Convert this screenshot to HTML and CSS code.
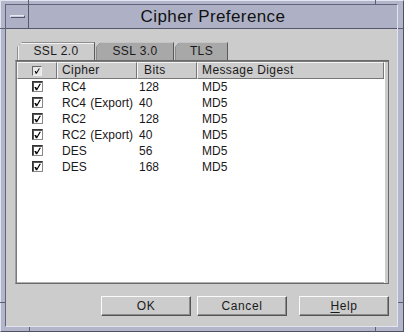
FILE: index.html
```html
<!DOCTYPE html>
<html lang="en">
<head>
    <meta charset="UTF-8">
    <title>Cipher Preference</title>
    <link rel="stylesheet" href="styles.css">
</head>
<body>
    <div class="frame">
        <span class="notch notch-tl-h"></span>
        <span class="notch notch-tl-v"></span>
        <span class="notch notch-tr-h"></span>
        <span class="notch notch-tr-v"></span>
        <span class="notch notch-bl-h"></span>
        <span class="notch notch-bl-v"></span>
        <span class="notch notch-br-h"></span>
        <span class="notch notch-br-v"></span>
        <div class="window">
            <div class="titlebar">
                <div class="minimize"><span class="dash"></span></div>
                <div class="title">Cipher Preference</div>
            </div>
            <div class="content">
                <div class="tabs">
                    <div class="tab active">SSL 2.0</div>
                    <div class="tab">SSL 3.0</div>
                    <div class="tab tab-small">TLS</div>
                </div>
                <div class="panel">
                    <div class="table">
                        <div class="head"><span class="box box-head"><svg viewBox="0 0 10 10"><polygon points="2,5 3.5,5 4.3,6.6 7.3,2 8.6,2 4.6,8.4 3.4,8.4"/></svg></span></div>
                        <div class="head">Cipher</div>
                        <div class="head head-bits">Bits</div>
                        <div class="head">Message Digest</div>

                        <div class="cell check"><span class="box"><svg viewBox="0 0 10 10"><polygon points="1.5,5 3.5,5 4.3,6.6 7.3,1.5 8.8,1.5 4.6,8.6 3.2,8.6"/></svg></span></div>
                        <div class="cell">RC4</div><div class="cell bits">128</div><div class="cell">MD5</div>

                        <div class="cell check"><span class="box"><svg viewBox="0 0 10 10"><polygon points="1.5,5 3.5,5 4.3,6.6 7.3,1.5 8.8,1.5 4.6,8.6 3.2,8.6"/></svg></span></div>
                        <div class="cell">RC4 (Export)</div><div class="cell bits">40</div><div class="cell">MD5</div>

                        <div class="cell check"><span class="box"><svg viewBox="0 0 10 10"><polygon points="1.5,5 3.5,5 4.3,6.6 7.3,1.5 8.8,1.5 4.6,8.6 3.2,8.6"/></svg></span></div>
                        <div class="cell">RC2</div><div class="cell bits">128</div><div class="cell">MD5</div>

                        <div class="cell check"><span class="box"><svg viewBox="0 0 10 10"><polygon points="1.5,5 3.5,5 4.3,6.6 7.3,1.5 8.8,1.5 4.6,8.6 3.2,8.6"/></svg></span></div>
                        <div class="cell">RC2 (Export)</div><div class="cell bits">40</div><div class="cell">MD5</div>

                        <div class="cell check"><span class="box"><svg viewBox="0 0 10 10"><polygon points="1.5,5 3.5,5 4.3,6.6 7.3,1.5 8.8,1.5 4.6,8.6 3.2,8.6"/></svg></span></div>
                        <div class="cell">DES</div><div class="cell bits">56</div><div class="cell">MD5</div>

                        <div class="cell check"><span class="box"><svg viewBox="0 0 10 10"><polygon points="1.5,5 3.5,5 4.3,6.6 7.3,1.5 8.8,1.5 4.6,8.6 3.2,8.6"/></svg></span></div>
                        <div class="cell">DES</div><div class="cell bits">168</div><div class="cell">MD5</div>
                    </div>
                </div>
                <div class="buttons">
                    <button class="btn">OK</button>
                    <button class="btn">Cancel</button>
                    <button class="btn btn-help"><u>H</u>elp</button>
                </div>
            </div>
        </div>
    </div>
</body>
</html>
```

FILE: styles.css
```css
html, body {
    margin: 0;
    padding: 0;
    background-color: #b3b6cb;
}
body {
    font-family: "Liberation Sans", Arial, sans-serif;
    font-size: 12px;
    letter-spacing: 0.4px;
    color: #1a1a1a;
}
.frame {
    position: relative;
    width: 404px;
    height: 332px;
    box-sizing: border-box;
    background-color: #b3b6cb;
    border: 1px solid;
    border-color: #e2e4f0 #4f5263 #4f5263 #e2e4f0;
    padding: 3px 5px 4px 4px;
}
.notch {
    position: absolute;
    background-color: #5c5f72;
}
.notch-tl-h { left: -1px; top: 27px; width: 5px; height: 1px; }
.notch-tl-v { left: 27px; top: -1px; width: 1px; height: 5px; }
.notch-tr-h { right: -1px; top: 27px; width: 6px; height: 1px; }
.notch-tr-v { left: 374px; top: -1px; width: 1px; height: 5px; }
.notch-bl-h { left: -1px; top: 301px; width: 5px; height: 1px; }
.notch-bl-v { left: 28px; bottom: -1px; width: 1px; height: 5px; }
.notch-br-h { right: -1px; top: 301px; width: 6px; height: 1px; }
.notch-br-v { left: 374px; bottom: -1px; width: 1px; height: 5px; }
.window {
    height: 100%;
    box-sizing: border-box;
    border: 1px solid;
    border-color: #62657a #e2e4f0 #e2e4f0 #62657a;
    display: flex;
    flex-direction: column;
}
.titlebar {
    height: 24px;
    box-sizing: border-box;
    background-color: #aeb1c6;
    border-bottom: 1px solid #55586b;
    display: flex;
}
.minimize {
    width: 22px;
    border-right: 1px solid #55586b;
    display: flex;
    align-items: center;
    justify-content: center;
}
.dash {
    width: 15px;
    height: 3px;
    box-sizing: border-box;
    background-color: #c9cbdc;
    border: 1px solid;
    border-color: #e6e8f2 #55586b #55586b #e6e8f2;
    margin-top: -1px;
}
.title {
    flex: 1;
    text-align: center;
    font-size: 17px;
    letter-spacing: 0.4px;
    line-height: 23px;
    color: #111;
}
.content {
    flex: 1;
    background-color: #cccccc;
    padding: 13px 8px 10px 9px;
    display: flex;
    flex-direction: column;
}
.tabs {
    display: flex;
    height: 18px;
    padding-left: 2px;
}
.tab {
    width: 78px;
    box-sizing: border-box;
    text-align: center;
    line-height: 17px;
    background-color: #a8a8a8;
    border-top: 1px solid #c4c4c4;
    border-left: 1px solid #8a8a8a;
    border-right: 1px solid #5a5a5a;
    margin-right: 1px;
    clip-path: polygon(5px 0, 100% 0, 100% 100%, 0 100%, 0 5px);
    background-image: linear-gradient(135deg, #cccccc 3.2px, #777 3.2px, #777 4.2px, transparent 4.2px);
    background-origin: border-box;
}
.tab-small {
    width: 53px;
}
.tab.active {
    background-color: #cccccc;
    border-top-color: #8e8e8e;
    border-left-color: #8e8e8e;
    box-shadow: inset 1px 1px #f2f2f2;
    background-image: linear-gradient(135deg, #cccccc 3.2px, #8e8e8e 3.2px, #8e8e8e 4.2px, transparent 4.2px);
}
.panel {
    flex: 1;
    background-color: #fff;
    border: 1px solid;
    border-color: #6a6a6a #6a6a6a #6a6a6a #a0a0a0;
    box-shadow: inset 1px 1px #7a7a7a, inset -3px 0 #cccccc, inset -4px 0 #fff, inset 0 -1px #b0b0b0;
    padding: 1px 0 0 1px;
}
.table {
    display: grid;
    grid-template-columns: 40px 80px 60px 187px;
    grid-auto-rows: 16px;
}
.head {
    height: 17px;
    box-sizing: border-box;
    background-color: #cccccc;
    border: 1px solid;
    border-color: #f4f4f4 #777 #777 #f4f4f4;
    padding-left: 4px;
    line-height: 15px;
}
.head:first-child {
    display: flex;
    align-items: center;
    justify-content: center;
    padding-left: 0;
}
.head-bits {
    padding-left: 6px;
}
.cell {
    padding-left: 5px;
    line-height: 16px;
    margin-top: 1px;
    white-space: nowrap;
    letter-spacing: 0;
    word-spacing: 1px;
}
.cell.bits {
    padding-left: 2px;
}
.cell.check {
    display: flex;
    align-items: center;
    padding-left: 15px;
}
.box {
    width: 11px;
    height: 11px;
    box-sizing: border-box;
    background-color: #fff;
    border: 1px solid;
    border-color: #333 #888 #888 #333;
    box-shadow: inset 1px 1px #555;
    display: flex;
}
.box svg {
    width: 10px;
    height: 10px;
}
.box-head {
    width: 10px;
    height: 10px;
    background-color: #e8e8e8;
    border-color: #666 #eee #eee #666;
    box-shadow: none;
}
.box-head svg {
    width: 8px;
    height: 8px;
}
.buttons {
    display: flex;
    justify-content: flex-end;
    margin-top: 12px;
}
.btn {
    width: 90px;
    height: 20px;
    box-sizing: border-box;
    margin-left: 6px;
    padding: 0;
    font-family: inherit;
    font-size: 12px;
    letter-spacing: 0.6px;
    color: #1a1a1a;
    background-color: #cccccc;
    border: 1px solid;
    border-color: #fafafa #555 #555 #fafafa;
    box-shadow: inset -1px -1px #8a8a8a;
}
.btn-help {
    margin-left: 12px;
}
.btn u {
    text-decoration-thickness: 1px;
    text-underline-offset: 2px;
}
```
